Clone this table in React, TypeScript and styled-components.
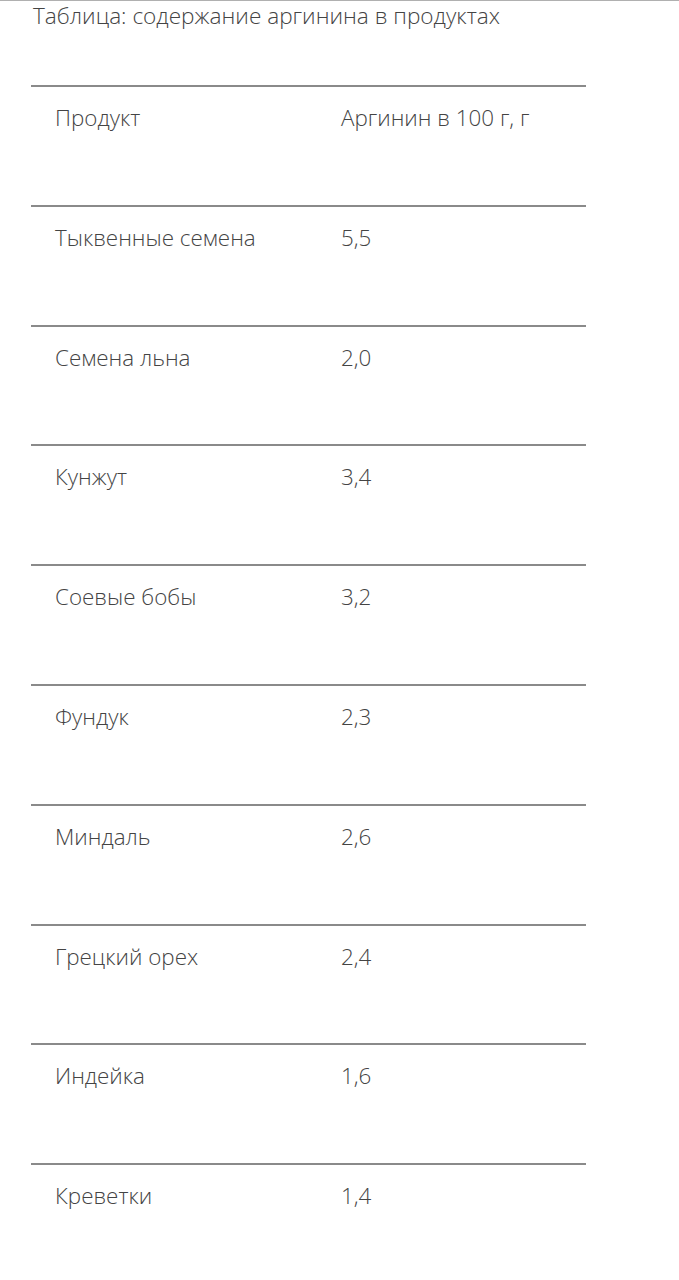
import React from "react";
import styled, { createGlobalStyle } from "styled-components";

const Global = createGlobalStyle`
  html, body { margin: 0; padding: 0; background: #fff; }
  body { font-family: "Open Sans", "Noto Sans", sans-serif; color: #444; }
`;

const Page = styled.div`
  border-top: 1px solid #b0b0b0;
  padding-left: 31px;
  width: 679px;
  box-sizing: border-box;
`;

const Title = styled.div`
  margin: 1px 0 0 2px;
  font-size: 22.6px;
  font-weight: 300;
  line-height: 28px;
  color: #444;
  white-space: nowrap;
`;

const Table = styled.div`
  margin-top: 55px;
  width: 555px;
`;

const Row = styled.div`
  display: grid;
  grid-template-columns: 286px 1fr;
  border-top: 2px solid #8a8a8a;
  height: 119.8px;
  box-sizing: border-box;
  padding: 17px 0 0 24px;
`;

const Cell = styled.div`
  font-size: 22.4px;
  font-weight: 300;
  line-height: 28px;
  color: #444;
  white-space: nowrap;
`;

const rows: [string, string][] = [
  ["Продукт", "Аргинин в 100 г, г"],
  ["Тыквенные семена", "5,5"],
  ["Семена льна", "2,0"],
  ["Кунжут", "3,4"],
  ["Соевые бобы", "3,2"],
  ["Фундук", "2,3"],
  ["Миндаль", "2,6"],
  ["Грецкий орех", "2,4"],
  ["Индейка", "1,6"],
  ["Креветки", "1,4"],
];

export default function App() {
  return (
    <>
      <Global />
      <Page>
        <Title>Таблица: содержание аргинина в продуктах</Title>
        <Table>
          {rows.map(([a, b]) => (
            <Row key={a}>
              <Cell>{a}</Cell>
              <Cell>{b}</Cell>
            </Row>
          ))}
        </Table>
      </Page>
    </>
  );
}
